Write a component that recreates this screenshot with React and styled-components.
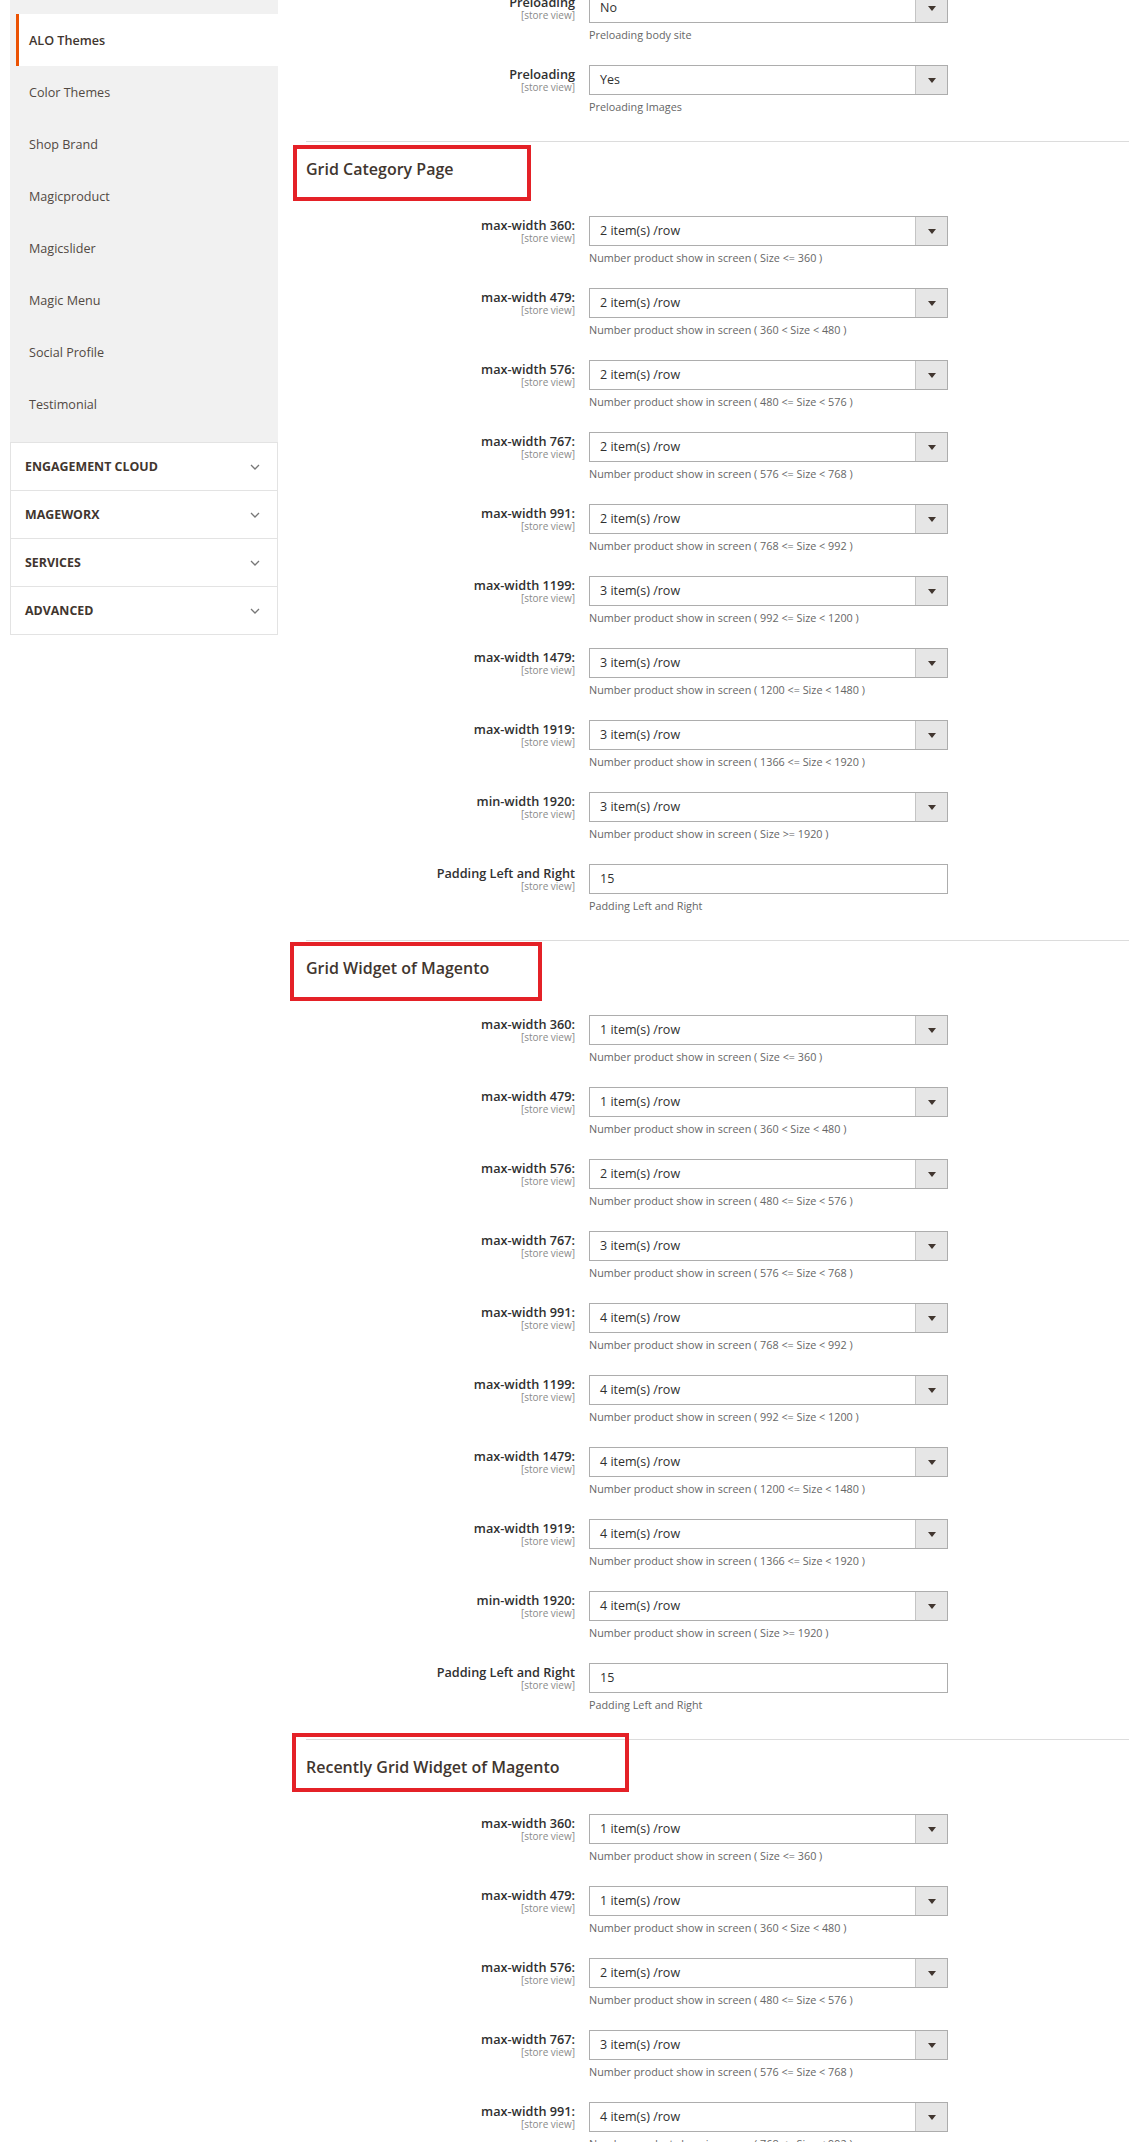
import React from "react";
import styled, { createGlobalStyle } from "styled-components";

const GlobalStyle = createGlobalStyle`
  html, body {
    margin: 0;
    padding: 0;
    background: #fff;
  }
  body {
    font-family: "Open Sans", "Liberation Sans", sans-serif;
    color: #303030;
  }
`;

const Page = styled.div`
  display: flex;
  align-items: flex-start;
  height: 2142px;
  overflow: hidden;
`;

/* ---------- sidebar ---------- */

const Sidebar = styled.aside`
  width: 268px;
  margin-left: 10px;
  flex-shrink: 0;
`;

const NavList = styled.ul`
  list-style: none;
  margin: 0;
  padding: 14px 0 12px;
  background: #f1f1f1;
`;

const NavItem = styled.li`
  display: flex;
  align-items: center;
  height: 52px;
  margin-left: 6px;
  padding-left: 10px;
  border-left: 3px solid ${(p) => (p.$active ? "#eb5202" : "transparent")};
  background: ${(p) => (p.$active ? "#fff" : "transparent")};
  font-size: 12.6px;
  font-weight: ${(p) => (p.$active ? 600 : 400)};
  color: ${(p) => (p.$active ? "#41362f" : "#514943")};
`;

const GroupList = styled.div`
  border: 1px solid #e3e3e3;
  border-bottom: none;
  background: #fff;
`;

const Group = styled.div`
  display: flex;
  align-items: center;
  justify-content: space-between;
  height: 47px;
  padding: 0 17px 0 14px;
  border-bottom: 1px solid #e3e3e3;
  font-size: 12.4px;
  font-weight: 700;
  text-transform: uppercase;
  color: #41362f;
`;

const Chevron = () => (
  <svg width="10" height="6" viewBox="0 0 10 6">
    <path d="M1 1l4 4 4-4" fill="none" stroke="#777" strokeWidth="1.3" />
  </svg>
);

/* ---------- main ---------- */

const Main = styled.main`
  flex: 1;
  margin-left: 28px;
  margin-top: -7px;
`;

const Fieldset = styled.section`
  position: relative;
  padding-bottom: 4px;
  border-top: ${(p) => (p.$plain ? "none" : "1px solid #dcdcdc")};
`;

const Legend = styled.h3`
  margin: 0 0 37px;
  padding-top: 17px;
  font-size: 16px;
  line-height: 20px;
  font-weight: 600;
  color: #41362f;
`;

const Annotation = styled.div`
  position: absolute;
  top: ${(p) => p.$top}px;
  left: ${(p) => p.$left}px;
  width: ${(p) => p.$width}px;
  height: ${(p) => p.$height}px;
  box-sizing: border-box;
  border: 4px solid #e42127;
  pointer-events: none;
`;

const Row = styled.div`
  display: grid;
  grid-template-columns: 269px 359px;
  column-gap: 14px;
  height: 72px;
`;

const Label = styled.div`
  text-align: right;
  padding-top: 1px;
`;

const LabelText = styled.div`
  font-size: 12.7px;
  line-height: 16px;
  font-weight: 600;
  color: #303030;
`;

const Scope = styled.div`
  font-size: 10px;
  line-height: 10px;
  color: #8a8a8a;
`;

const Field = styled.div`
  display: flex;
  height: 30px;
  box-sizing: border-box;
  border: 1px solid #adadad;
  background: #fff;
`;

const Value = styled.div`
  flex: 1;
  padding-left: 10px;
  font-size: 12.5px;
  line-height: 28px;
  color: #303030;
`;

const ArrowBox = styled.div`
  display: flex;
  align-items: center;
  justify-content: center;
  width: 31px;
  border-left: 1px solid #c4c4c4;
  background: #e6e6e6;
`;

const Caret = styled.span`
  width: 0;
  height: 0;
  border-left: 4px solid transparent;
  border-right: 4px solid transparent;
  border-top: 5px solid #41362f;
`;

const Note = styled.div`
  margin-top: 4px;
  font-size: 10.8px;
  line-height: 16px;
  color: #666;
`;

const ConfigRow = ({ label, value, note, select = true }) => (
  <Row>
    <Label>
      <LabelText>{label}</LabelText>
      <Scope>[store view]</Scope>
    </Label>
    <div>
      <Field>
        <Value>{value}</Value>
        {select && (
          <ArrowBox>
            <Caret />
          </ArrowBox>
        )}
      </Field>
      <Note>{note}</Note>
    </div>
  </Row>
);

const breakpoints = [
  ["max-width 360:", "( Size <= 360 )"],
  ["max-width 479:", "( 360 < Size < 480 )"],
  ["max-width 576:", "( 480 <= Size < 576 )"],
  ["max-width 767:", "( 576 <= Size < 768 )"],
  ["max-width 991:", "( 768 <= Size < 992 )"],
  ["max-width 1199:", "( 992 <= Size < 1200 )"],
  ["max-width 1479:", "( 1200 <= Size < 1480 )"],
  ["max-width 1919:", "( 1366 <= Size < 1920 )"],
  ["min-width 1920:", "( Size >= 1920 )"],
];

const sections = [
  {
    title: "Grid Category Page",
    box: { top: 3, left: -13, width: 238, height: 56 },
    items: [2, 2, 2, 2, 2, 3, 3, 3, 3],
    padding: true,
  },
  {
    title: "Grid Widget of Magento",
    box: { top: 1, left: -16, width: 252, height: 59 },
    items: [1, 1, 2, 3, 4, 4, 4, 4, 4],
    padding: true,
  },
  {
    title: "Recently Grid Widget of Magento",
    box: { top: -7, left: -14, width: 337, height: 59 },
    items: [1, 1, 2, 3, 4],
    padding: false,
  },
];

const navItems = [
  "ALO Themes",
  "Color Themes",
  "Shop Brand",
  "Magicproduct",
  "Magicslider",
  "Magic Menu",
  "Social Profile",
  "Testimonial",
];

const groups = ["Engagement Cloud", "Mageworx", "Services", "Advanced"];

export default function App() {
  return (
    <>
      <GlobalStyle />
      <Page>
        <Sidebar>
          <NavList>
            {navItems.map((name, i) => (
              <NavItem key={name} $active={i === 0}>
                {name}
              </NavItem>
            ))}
          </NavList>
          <GroupList>
            {groups.map((g) => (
              <Group key={g}>
                {g}
                <Chevron />
              </Group>
            ))}
          </GroupList>
        </Sidebar>

        <Main>
          <Fieldset $plain>
            <ConfigRow label="Preloading" value="No" note="Preloading body site" />
            <ConfigRow label="Preloading" value="Yes" note="Preloading Images" />
          </Fieldset>

          {sections.map((s) => (
            <Fieldset key={s.title}>
              <Annotation
                $top={s.box.top}
                $left={s.box.left}
                $width={s.box.width}
                $height={s.box.height}
              />
              <Legend>{s.title}</Legend>
              {s.items.map((n, i) => (
                <ConfigRow
                  key={breakpoints[i][0]}
                  label={breakpoints[i][0]}
                  value={`${n} item(s) /row`}
                  note={`Number product show in screen ${breakpoints[i][1]}`}
                />
              ))}
              {s.padding && (
                <ConfigRow
                  label="Padding Left and Right"
                  value="15"
                  note="Padding Left and Right"
                  select={false}
                />
              )}
            </Fieldset>
          ))}
        </Main>
      </Page>
    </>
  );
}
